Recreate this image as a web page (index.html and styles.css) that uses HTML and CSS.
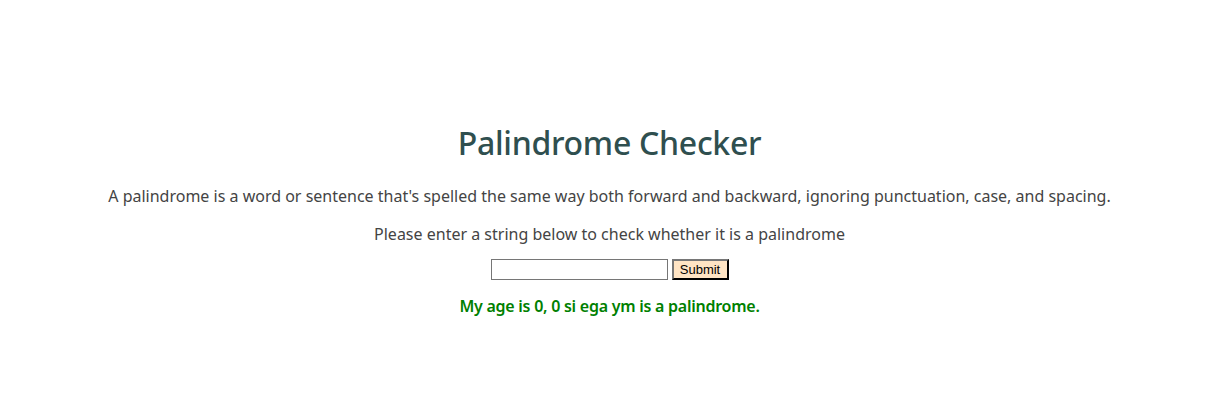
FILE: index.html
```html
<!DOCTYPE html>
<html>
<head>
<meta charset="utf-8">
<title>Palindrome Checker</title>
<link rel="stylesheet" href="styles.css">
</head>
<body>
<main class="container">
  <h1 class="title">Palindrome Checker</h1>
  <p class="text">A palindrome is a word or sentence that's spelled the same way both forward and backward, ignoring punctuation, case, and spacing.</p>
  <p class="text">Please enter a string below to check whether it is a palindrome</p>
  <form class="form">
    <input class="input" type="text">
    <button class="btn" type="button">Submit</button>
  </form>
  <p class="result">My age is 0, 0 si ega ym is a palindrome.</p>
</main>
</body>
</html>
```
FILE: styles.css
```css
html, body {
  margin: 0;
  padding: 0;
  background: #fff;
}
body {
  font-family: "Noto Sans", sans-serif;
}
.container {
  padding-top: 100px;
  padding-right: 12px;
  text-align: center;
}
.title {
  font-size: 32px;
  font-weight: 500;
  letter-spacing: -0.28px;
  color: #2f4f4f;
  margin: 21px 0;
}
.text {
  font-size: 16px;
  color: #444;
  margin: 16px 0;
}
.text + .text {
  margin: 14px 0 14px;
}
.form {
  margin: 0;
  display: flex;
  justify-content: center;
  align-items: center;
  gap: 4px;
}
.input {
  box-sizing: border-box;
  width: 177px;
  height: 21px;
  padding: 1px 2px;
  border: 1px solid #767676;
  border-radius: 0;
  font-family: Arial, sans-serif;
  font-size: 13px;
}
.btn {
  box-sizing: border-box;
  width: 57px;
  height: 21px;
  font-family: "Liberation Sans", Arial, sans-serif;
  font-size: 13px;
  background: #ffe4c4;
  border: 2px outset #222;
  padding: 0 4px;
  color: #000;
}
.result {
  font-size: 16px;
  font-weight: 600;
  letter-spacing: -0.25px;
  color: #008000;
  margin: 15px 0;
}
```
